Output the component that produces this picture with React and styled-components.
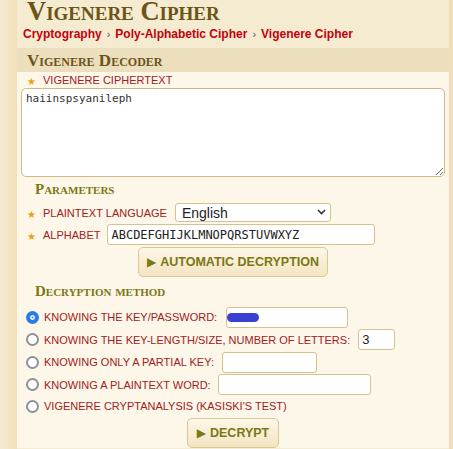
import React, { useState } from 'react';
import styled, { createGlobalStyle } from 'styled-components';

const GlobalStyle = createGlobalStyle`
  html, body {
    margin: 0;
    padding: 0;
    background: #f5ebd1;
    font-family: "Liberation Sans", Arial, sans-serif;
  }
`;

const Page = styled.div`
  display: flex;
  min-height: 449px;
  overflow: hidden;
`;

const Rail = styled.div`
  width: ${(props) => props.width}px;
  flex-shrink: 0;
  background: ${(props) => props.bg};
`;

const Main = styled.div`
  width: 432px;
  display: flex;
  flex-direction: column;
`;

const Title = styled.h1`
  margin: 0 0 0 10px;
  font-family: "Liberation Serif", "Times New Roman", serif;
  font-size: 26.5px;
  line-height: 22px;
  font-weight: bold;
  font-variant: small-caps;
  color: #6b5416;
`;

const Crumbs = styled.div`
  display: flex;
  align-items: center;
  gap: 5px;
  margin: 4px 0 6px 6px;
  font-size: 12px;
  line-height: 16px;
  font-weight: bold;
`;

const Crumb = styled.span`
  color: #c4000c;
`;

const Sep = styled.span`
  color: #555;
  font-weight: normal;
  font-size: 11px;
`;

const Panel = styled.section`
  background: #fcf7e8;
`;

const PanelHead = styled.div`
  height: 24px;
  padding-left: 10px;
  background: #ebdfbe;
  font-family: "Liberation Serif", "Times New Roman", serif;
  font-size: 17px;
  line-height: 25px;
  font-weight: bold;
  font-variant: small-caps;
  color: #6b5416;
`;

const PanelBody = styled.div`
  padding: 0 4px 0 4px;
  display: flex;
  flex-direction: column;
`;

const FieldLabel = styled.label`
  display: flex;
  align-items: center;
  gap: 7px;
  padding-left: ${(props) => props.indent || 6}px;
  font-size: 11px;
  line-height: 16px;
  color: #a3201c;
  text-transform: uppercase;
  white-space: nowrap;
`;

const Star = styled.span`
  color: #e8a114;
  font-family: "DejaVu Sans", sans-serif;
  font-size: 10px;
  width: 9px;
  position: relative;
  top: 2px;
`;

const TextArea = styled.textarea`
  box-sizing: border-box;
  width: 424px;
  height: 89px;
  margin: 0;
  padding: 3px 4px;
  border: 1px solid #d1b985;
  border-radius: 5px;
  background: #fff;
  font-family: "DejaVu Sans Mono", monospace;
  font-size: 11px;
  line-height: 14px;
  color: #333;
  resize: vertical;
  outline: none;
`;

const SubHead = styled.h3`
  margin: ${(props) => props.mt}px 0 0 14px;
  padding-bottom: ${(props) => props.pb}px;
  font-family: "Liberation Serif", "Times New Roman", serif;
  font-size: 15px;
  line-height: 17px;
  font-weight: bold;
  font-variant: small-caps;
  color: #7b7714;
`;

const Row = styled.div`
  display: flex;
  align-items: center;
  gap: ${(props) => props.gap || 8}px;
  height: ${(props) => props.h || 21}px;
  margin-bottom: ${(props) => props.mb || 0}px;
  padding-left: ${(props) => props.indent || 0}px;
`;

const SelectWrap = styled.div`
  position: relative;
  width: 156px;
  height: 19px;
`;

const Select = styled.select`
  box-sizing: border-box;
  width: 100%;
  height: 100%;
  appearance: none;
  border: 1px solid #d6c18f;
  border-radius: 3px;
  background: #fff;
  padding: 0 6px;
  font-family: "Liberation Sans", Arial, sans-serif;
  font-size: 14px;
  color: #222;
  outline: none;
`;

const Chevron = styled.svg`
  position: absolute;
  right: 5px;
  top: 6px;
  pointer-events: none;
`;

const Input = styled.input`
  box-sizing: border-box;
  width: ${(props) => props.w}px;
  height: 21px;
  margin: 0;
  padding: 0 3px;
  border: 1px solid #d6c18f;
  border-radius: 3px;
  background: #fff;
  font-family: ${(props) => (props.mono ? '"DejaVu Sans Mono", monospace' : '"Liberation Sans", Arial, sans-serif')};
  font-size: ${(props) => (props.mono ? 12 : 13)}px;
  color: #222;
  outline: none;
`;

const InputWrap = styled.div`
  position: relative;
  display: flex;
`;

const Redact = styled.span`
  position: absolute;
  left: 1px;
  top: 6px;
  width: 32px;
  height: 9px;
  border-radius: 5px;
  background: #3a40cf;
`;

const ButtonRow = styled.div`
  display: flex;
  justify-content: center;
  margin-top: ${(props) => props.mt}px;
`;

const Button = styled.button`
  box-sizing: border-box;
  display: flex;
  align-items: center;
  justify-content: center;
  gap: 4px;
  width: ${(props) => props.w}px;
  height: 30px;
  border: 1px solid #d9c796;
  border-radius: 5px;
  background: linear-gradient(#fdf7e6, #f3e5c2);
  font-family: "Liberation Sans", Arial, sans-serif;
  font-size: 12.5px;
  font-weight: bold;
  color: #7b7714;
  cursor: pointer;
  padding: 0;
`;

const Play = styled.span`
  font-family: "DejaVu Sans", sans-serif;
  font-size: 12px;
  font-weight: normal;
`;

const Radio = styled.input`
  appearance: none;
  box-sizing: border-box;
  width: 13px;
  height: 13px;
  margin: 0;
  border-radius: 50%;
  border: 2px solid #8f8f9d;
  background: #fff;
  flex-shrink: 0;
  &:checked {
    border: 4px solid #2f7be6;
    background: #2f7be6;
    box-shadow: inset 0 0 0 1.5px #fff;
  }
`;

const MethodLabel = styled.span`
  font-size: 11px;
  color: #a3201c;
  text-transform: uppercase;
  white-space: nowrap;
  margin-right: ${(props) => props.space || 0}px;
`;

const methods = [
  { id: 'key', text: 'Knowing the key/password:', input: 122, space: 4 },
  { id: 'len', text: 'Knowing the key-length/size, number of letters:', input: 37, space: 3, value: '3' },
  { id: 'partial', text: 'Knowing only a partial key:', input: 95, space: 3 },
  { id: 'word', text: 'Knowing a plaintext word:', input: 153, space: 2 },
  { id: 'kasiski', text: "Vigenere cryptanalysis (Kasiski's test)" },
];

const App = () => {
  const [method, setMethod] = useState('key');

  return (
    <>
      <GlobalStyle />
      <Page>
        <Rail width={17} bg="linear-gradient(to right, #f6ebd2, #f1e0bb)" />
        <Main>
          <Title>Vigenere Cipher</Title>
          <Crumbs>
            <Crumb>Cryptography</Crumb>
            <Sep>›</Sep>
            <Crumb>Poly-Alphabetic Cipher</Crumb>
            <Sep>›</Sep>
            <Crumb>Vigenere Cipher</Crumb>
          </Crumbs>
          <Panel>
            <PanelHead>Vigenere Decoder</PanelHead>
            <PanelBody>
              <FieldLabel>
                <Star>★</Star>Vigenere ciphertext
              </FieldLabel>
              <TextArea defaultValue="haiinspsyanileph" />
              <SubHead mt={4} pb={5}>Parameters</SubHead>
              <Row mb={2} h={19}>
                <FieldLabel as="span" indent={6}>
                  <Star>★</Star>Plaintext language
                </FieldLabel>
                <SelectWrap>
                  <Select defaultValue="en">
                    <option value="en">English</option>
                  </Select>
                  <Chevron width="9" height="6" viewBox="0 0 9 6">
                    <path d="M1 1 L4.5 4.5 L8 1" fill="none" stroke="#333" strokeWidth="1.6" />
                  </Chevron>
                </SelectWrap>
              </Row>
              <Row gap={7}>
                <FieldLabel as="span" indent={6}>
                  <Star>★</Star>Alphabet
                </FieldLabel>
                <Input w={268} mono defaultValue="ABCDEFGHIJKLMNOPQRSTUVWXYZ" />
              </Row>
              <ButtonRow mt={2}>
                <Button w={190}>
                  <Play>▶</Play>AUTOMATIC DECRYPTION
                </Button>
              </ButtonRow>
              <SubHead mt={6} pb={6}>Decryption method</SubHead>
              {methods.map((m) => (
                <Row key={m.id} indent={5} gap={5} h={m.input ? 22 : 20} mb={0.5}>
                  <Radio
                    type="radio"
                    name="method"
                    checked={method === m.id}
                    onChange={() => setMethod(m.id)}
                  />
                  <MethodLabel space={m.space}>{m.text}</MethodLabel>
                  {m.input && (
                    <InputWrap>
                      <Input w={m.input} defaultValue={m.value || ''} />
                      {m.id === 'key' && <Redact />}
                    </InputWrap>
                  )}
                </Row>
              ))}
              <ButtonRow mt={1}>
                <Button w={92}>
                  <Play>▶</Play>DECRYPT
                </Button>
              </ButtonRow>
            </PanelBody>
          </Panel>
        </Main>
        <Rail width={4} bg="#efe0bb" />
      </Page>
    </>
  );
};

export default App;
